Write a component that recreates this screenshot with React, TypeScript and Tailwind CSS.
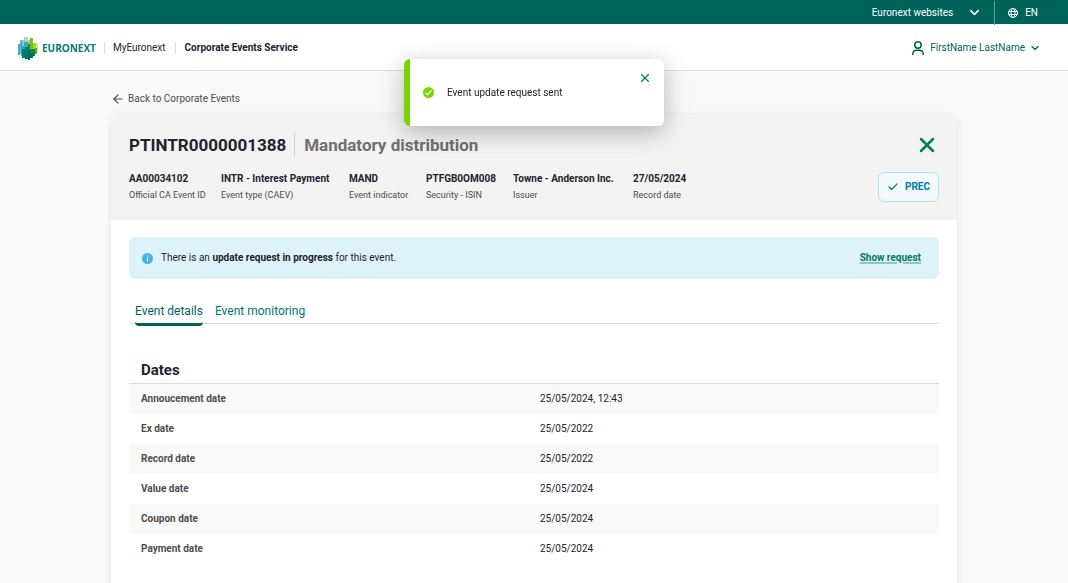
import { ArrowLeft, Check, ChevronDown, X } from 'lucide-react';

const fields = [
  { value: 'AA00034102', label: 'Official CA Event ID', width: 'w-[74px]' },
  { value: 'INTR - Interest Payment', label: 'Event type (CAEV)', width: 'w-[110px]' },
  { value: 'MAND', label: 'Event indicator', width: 'w-[59px]' },
  { value: 'PTFGB0OM008', label: 'Security - ISIN', width: 'w-[69px]' },
  { value: 'Towne - Anderson Inc.', label: 'Issuer', width: 'w-[102px]' },
  { value: '27/05/2024', label: 'Record date', width: 'w-[56px]' },
];

const dates = [
  { label: 'Annoucement date', value: '25/05/2024, 12:43' },
  { label: 'Ex date', value: '25/05/2022' },
  { label: 'Record date', value: '25/05/2022' },
  { label: 'Value date', value: '25/05/2024' },
  { label: 'Coupon date', value: '25/05/2024' },
  { label: 'Payment date', value: '25/05/2024' },
];

function Logo() {
  return (
    <svg className="h-6 w-5" viewBox="0 0 20 24" aria-hidden="true">
      <path fill="#3da9e0" d="M0 8h2v11H0z" />
      <path fill="#57b7e0" d="M2 4h2v14H2z" />
      <path fill="#3f9fb4" d="M3 7h3v13H3z" />
      <path fill="#a5d3cf" d="M6 1h4v8H6z" />
      <path fill="#8cc9c4" d="M4 4h3v6H4z" />
      <path fill="#4aa79d" d="M6 6h4v8H6z" />
      <path fill="#8cc9a4" d="M10 4h2v8h-2z" />
      <path fill="#86bc00" d="M12 2h3v14h-3z" />
      <path fill="#a7cf38" d="M15 7h3v10h-3z" />
      <path fill="#cfe59a" d="M18 7h2v9h-2z" />
      <path fill="#0c8a5c" d="M10 8h2v13h-2zM12 13h3v8h-3z" />
      <path fill="#007a68" d="M4 13h3v9H4zM7 11h3v12H7zM15 13h2v7h-2z" />
      <path fill="#00685c" d="M10 14h2v10h-2zM12 17h3v5h-3z" />
      <path fill="#5cae22" d="M17 12h2v6h-2z" />
    </svg>
  );
}

function TopBar() {
  return (
    <div className="flex h-6 items-center justify-end bg-[#00635a] pt-px pr-[30px] text-white">
      <button className="flex items-center gap-[14px] pr-3">
        Euronext websites
        <ChevronDown size={15} strokeWidth={2.5} />
      </button>
      <button className="flex h-6 items-center gap-[7px] border-l border-[#5c9c93] pl-[13px]">
        <svg className="size-[10px]" viewBox="0 0 20 20" fill="none" stroke="currentColor" strokeWidth="2" aria-hidden="true">
          <circle cx="10" cy="10" r="9" />
          <ellipse cx="10" cy="10" rx="4" ry="9" />
          <path d="M1.5 7h17M1.5 13h17" />
        </svg>
        EN
      </button>
    </div>
  );
}

function Header() {
  return (
    <header className="flex h-[47px] items-center justify-between border-b border-[#e0e0e0] bg-white pt-[2px] pr-[27px] pl-[18px]">
      <div className="flex items-center">
        <a href="#" className="flex items-center gap-1">
          <Logo />
          <span className="font-['Open_Sans',sans-serif] font-bold text-[#00806f]">EURONEXT</span>
        </a>
        <nav className="flex items-center">
          <span className="mx-2 h-3 w-px bg-[#dcdcdc]" />
          <a href="#">MyEuronext</a>
          <span className="mx-[9px] h-3 w-px bg-[#dcdcdc]" />
          <a href="#" className="font-bold">
            Corporate Events Service
          </a>
        </nav>
      </div>
      <button className="flex items-center text-[#00635a]">
        <svg className="mr-[6px] h-[14px] w-3" viewBox="0 0 12 14" fill="none" stroke="currentColor" strokeWidth="1.5" aria-hidden="true">
          <circle cx="6" cy="4" r="3.2" />
          <path d="M.8 14v-1.2a3.8 3.8 0 0 1 3.8-3.6h2.8a3.8 3.8 0 0 1 3.8 3.6V14" />
        </svg>
        FirstName LastName
        <ChevronDown size={12} strokeWidth={2.5} className="ml-1" />
      </button>
    </header>
  );
}

function Toast() {
  return (
    <div
      role="status"
      className="fixed top-[59px] left-1/2 flex h-[67px] w-[260px] -translate-x-1/2 items-center overflow-hidden rounded-md bg-white shadow-[0_6px_24px_rgba(0,0,0,0.28)]"
    >
      <div className="h-full w-[6px] bg-[#78d500]" />
      <svg className="ml-[13px] size-[11px]" viewBox="0 0 22 22" fill="none" aria-hidden="true">
        <circle cx="11" cy="11" r="11" fill="#78d500" />
        <path d="m5 11.5 4 4 8-8.500" stroke="#fff" strokeWidth="2.2" />
      </svg>
      <p className="ml-[13px] grow">Event update request sent</p>
      <button aria-label="Dismiss" className="mt-3 mr-3 self-start text-[#007a68]">
        <X size={14} strokeWidth={2} />
      </button>
    </div>
  );
}

function CardHeader() {
  return (
    <div className="rounded-t-lg bg-[#f3f3f3] p-[18px]">
      <div className="flex h-6 items-center justify-between">
        <h1 className="flex items-center text-[17px] leading-6 font-bold">
          <span className="pr-2">PTINTR0000001388</span>
          <span className="border-l border-[#cfcfcf] pl-[9px] text-[#707070]">Mandatory distribution</span>
        </h1>
        <button aria-label="Close" className="text-[#007a68]">
          <X size={24} strokeWidth={2.5} />
        </button>
      </div>
      <div className="mt-[15px] flex h-[30px] items-center justify-between">
        <dl className="flex gap-[18px] whitespace-nowrap">
          {fields.map((field) => (
            <div key={field.label} className={`flex flex-col-reverse ${field.width}`}>
              <dt className="text-[9px] text-[#4d4d4d]">{field.label}</dt>
              <dd className="font-bold">{field.value}</dd>
            </div>
          ))}
        </dl>
        <div className="flex h-[30px] items-center gap-[6px] rounded-md border border-[#b0e2f0] bg-[#f2fafe] px-2 font-bold text-[#007aa5]">
          <Check size={12} strokeWidth={2.5} />
          PREC
        </div>
      </div>
    </div>
  );
}

export default function App() {
  return (
    <div className="min-h-screen bg-[#f9f9f9] font-[Roboto,sans-serif] text-[10px] leading-4 text-[#22222e]">
      <TopBar />
      <Header />
      <Toast />
      <main className="mx-auto max-w-[846px] pt-5">
        <a href="#" className="flex w-fit items-center gap-[3px] text-[#4d4d4d]">
          <ArrowLeft size={14} strokeWidth={2} />
          Back to Corporate Events
        </a>
        <div className="mt-2 rounded-t-lg bg-white shadow-[0_0_6px_rgba(0,0,0,0.1)]">
          <CardHeader />
          <div className="px-[18px] pt-[17px] pb-5">
            <div className="flex h-[42px] items-center rounded-md bg-[#def2fa] pr-[18px] pl-[13px]">
              <svg className="size-[11px]" viewBox="0 0 22 22" aria-hidden="true">
                <circle cx="11" cy="11" r="11" fill="#41b6e9" />
                <path d="M10 5h2v2h-2zM10 9h2v8h-2z" fill="#fff" />
              </svg>
              <p className="ml-2 grow">
                There is an <strong>update request in progress</strong> for this event.
              </p>
              <a href="#" className="font-bold text-[#007a68] underline decoration-[#8ac9c6] decoration-2">
                Show request
              </a>
            </div>

            <div role="tablist" className="mt-5 flex h-[25px] gap-3 border-b border-[#e0e0e0] px-[6px] text-xs leading-4">
              <button role="tab" aria-selected="true" className="flex h-[27px] items-start rounded-b-sm border-b-[3px] border-[#00635a] pt-1 text-[#00635a]">
                Event details
              </button>
              <button role="tab" aria-selected="false" className="flex items-start pt-1 text-[#007a68]">
                Event monitoring
              </button>
            </div>

            <h2 className="mt-[34px] border-b border-[#dcdcdc] px-3 pb-px text-[15px] leading-6 font-bold">Dates</h2>
            <table className="w-full text-left">
              <tbody>
                {dates.map((row) => (
                  <tr key={row.label} className="h-[30px] odd:bg-[#f9f9f9]">
                    <th scope="row" className="w-[399px] px-3 font-bold text-[#4d4d4d]">
                      {row.label}
                    </th>
                    <td className="px-3">{row.value}</td>
                  </tr>
                ))}
              </tbody>
            </table>
          </div>
        </div>
      </main>
    </div>
  );
}
